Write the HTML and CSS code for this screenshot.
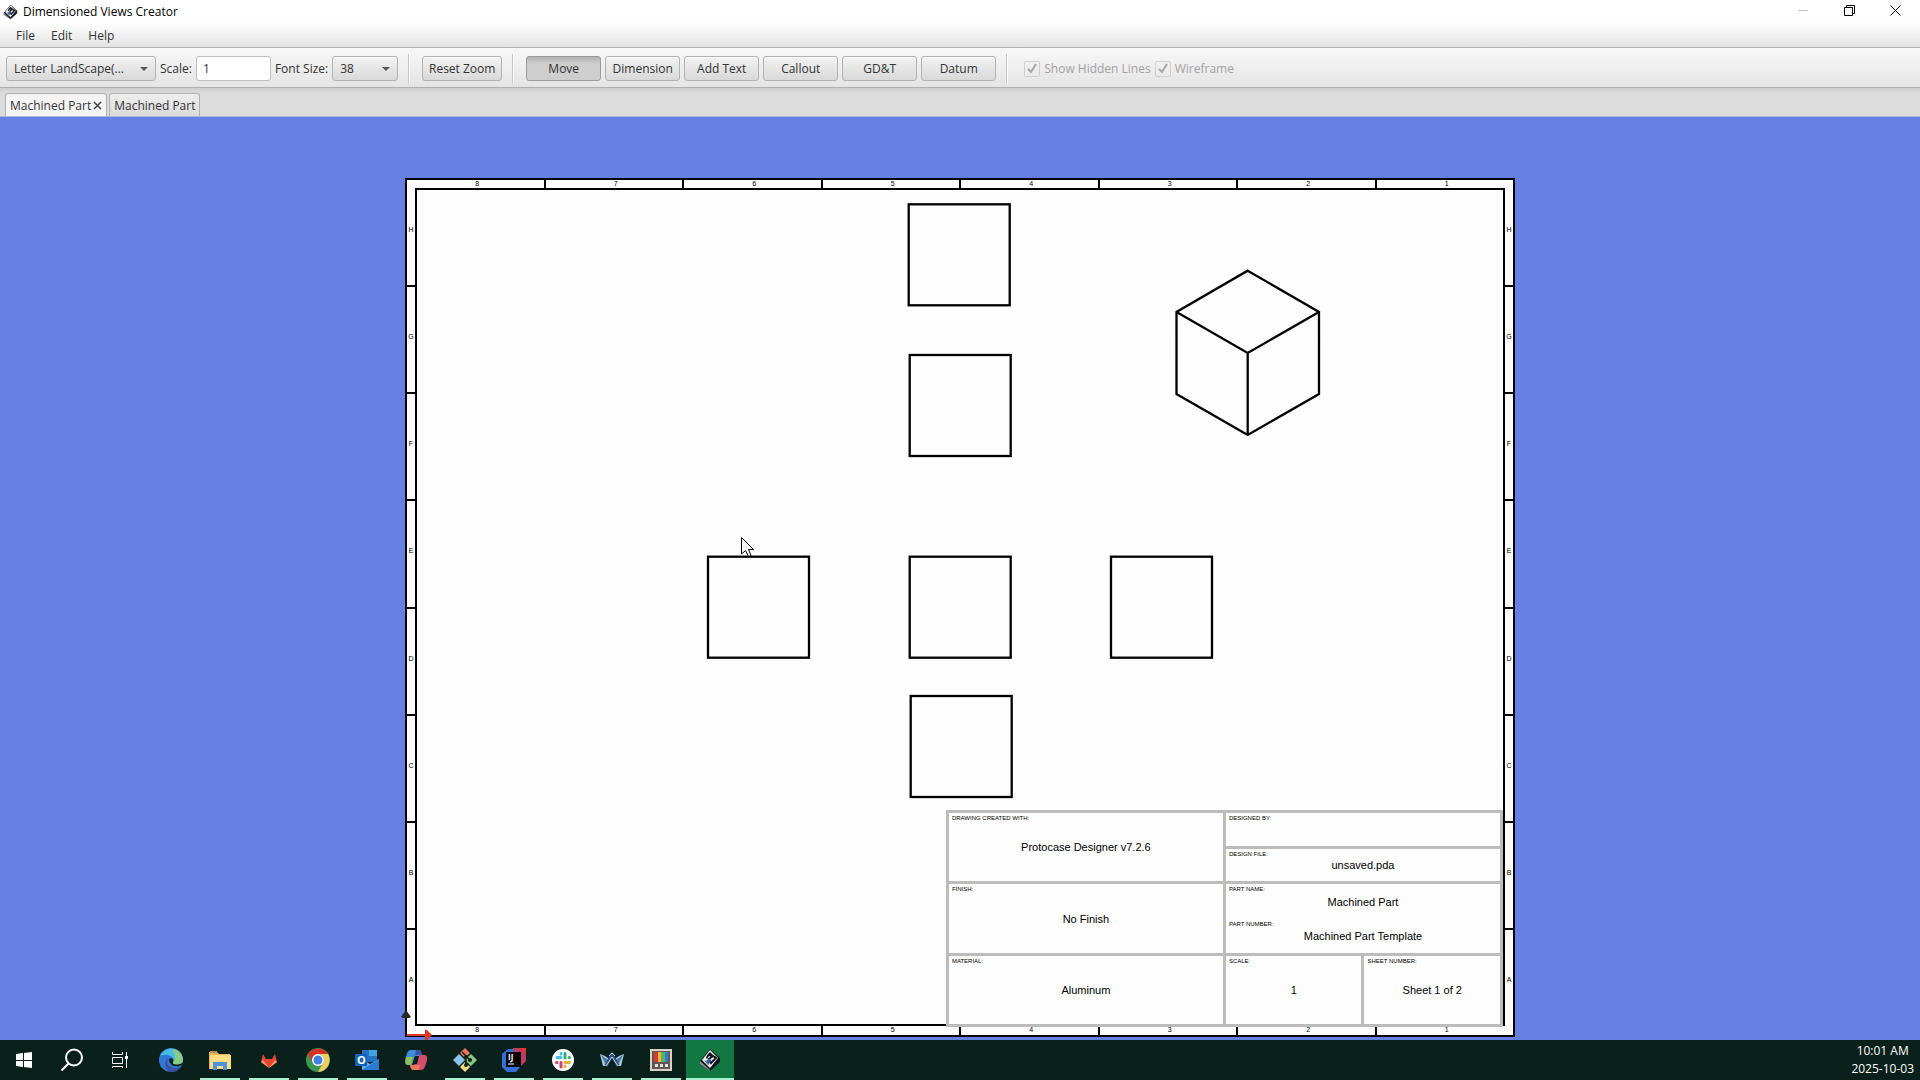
FILE: index.html
```
<!DOCTYPE html>
<html lang="en">
<head>
    <meta charset="UTF-8">
    <meta name="viewport" content="width=device-width, initial-scale=1.0">
    <title>Dimensioned Views Creator</title>
    <link rel="stylesheet" href="styles.css">
</head>
<body>
    <!-- shared app logo -->
    <svg class="symbols" aria-hidden="true">
        <symbol id="logo" viewBox="0 0 22 24">
            <path d="M1 13 L11 1 L21 10 L21 14 L11 23 L1 16 Z" fill="#10141c"/>
            <path d="M1 13 L11 22 L11 23 L1 16 Z" fill="#8d9299"/>
            <path d="M3 12 L11 2 L19 10 L11 20 Z" fill="#f4f4f4"/>
            <path d="M8 7 L11 4 L14 7 L12 9 L10 8 L8 11 L7 10 Z" fill="#10141c"/>
            <path d="M10 11 L14 8 L17 10 L12 15 Z" fill="none" stroke="#10141c" stroke-width="2"/>
            <path d="M5 12 L7 13 L10 10 L12 13 L10 16 L9 17 Z" fill="#3b62a8"/>
        </symbol>
    </svg>

    <header class="title-bar">
        <svg class="title-icon"><use href="#logo"/></svg>
        <h1>Dimensioned Views Creator</h1>
        <div class="window-buttons">
            <button aria-label="Minimize"><svg width="11" height="11"><path d="M0 5.5H10" stroke="#c4c4c4"/></svg></button>
            <button aria-label="Restore"><svg width="11" height="11"><path d="M.5 2.5H8.5V10.5H.5ZM2.5 2.5V.5H10.5V8.5H8.5" fill="none" stroke="#000"/></svg></button>
            <button aria-label="Close"><svg width="11" height="11"><path d="M.5 .5L10.5 10.5M10.5 .5L.5 10.5" stroke="#000"/></svg></button>
        </div>
    </header>

    <nav class="menu-bar">
        <button>File</button>
        <button>Edit</button>
        <button>Help</button>
    </nav>

    <div class="toolbar">
        <select class="page-size" aria-label="Page size"><option>Letter LandScape(...</option></select>
        <label for="scale">Scale:</label>
        <input type="text" id="scale" value="1">
        <label for="fontSize">Font Size:</label>
        <select id="fontSize"><option>38</option></select>
        <span class="separator"></span>
        <button>Reset Zoom</button>
        <span class="separator"></span>
        <div class="tools">
            <button class="pressed">Move</button>
            <button>Dimension</button>
            <button>Add Text</button>
            <button>Callout</button>
            <button>GD&amp;T</button>
            <button>Datum</button>
        </div>
        <span class="separator"></span>
        <div class="options">
            <input type="checkbox" id="hiddenLines" checked disabled>
            <label for="hiddenLines">Show Hidden Lines</label>
            <input type="checkbox" id="wireframe" checked disabled>
            <label for="wireframe">Wireframe</label>
        </div>
    </div>

    <div class="tabs">
        <button class="tab active">Machined Part
            <svg width="9" height="9"><path d="M1 1L8 8M8 1L1 8" stroke="#444" stroke-width="1.5"/></svg>
        </button>
        <button class="tab">Machined Part</button>
    </div>

    <main class="canvas">
        <div class="sheet">
            <div class="ruler top"><span>8</span><span>7</span><span>6</span><span>5</span><span>4</span><span>3</span><span>2</span><span>1</span></div>
            <div class="ruler side left"><span>H</span><span>G</span><span>F</span><span>E</span><span>D</span><span>C</span><span>B</span><span>A</span></div>
            <div class="ruler side right"><span>H</span><span>G</span><span>F</span><span>E</span><span>D</span><span>C</span><span>B</span><span>A</span></div>
            <div class="ruler bottom"><span>8</span><span>7</span><span>6</span><span>5</span><span>4</span><span>3</span><span>2</span><span>1</span></div>

            <div class="frame">
                <svg class="views" viewBox="0 0 1086 834">
                    <g fill="none" stroke="#000" stroke-width="2.3">
                        <rect x="491.7" y="14.3" width="101" height="101"/>
                        <rect x="492.7" y="165" width="101" height="101"/>
                        <rect x="291" y="366.7" width="101" height="101"/>
                        <rect x="492.7" y="366.7" width="101" height="101"/>
                        <rect x="694" y="366.7" width="101" height="101"/>
                        <rect x="493.7" y="506" width="101" height="101"/>
                        <!-- isometric view -->
                        <path d="M830.7 80.7L902 122V204L830.7 245L759.5 204V122ZM759.5 122L830.7 163L902 122M830.7 163V245"/>
                    </g>
                    <path d="M324.5 347.5V364L328.5 360.5L331.500 366.5L334 365.5L331.5 359.5H336.5Z" fill="#fff" stroke="#000"/>
                </svg>

                <dl class="title-block">
                    <div class="wide tall"><dt>DRAWING CREATED WITH:</dt><dd>Protocase Designer v7.2.6</dd></div>
                    <div class="wide"><dt>DESIGNED BY:</dt><dd></dd></div>
                    <div class="wide"><dt>DESIGN FILE:</dt><dd>unsaved.pda</dd></div>
                    <div class="wide tall"><dt>FINISH:</dt><dd>No Finish</dd></div>
                    <div class="wide tall part">
                        <div><dt>PART NAME:</dt><dd>Machined Part</dd></div>
                        <div><dt>PART NUMBER:</dt><dd>Machined Part Template</dd></div>
                    </div>
                    <div class="wide tall"><dt>MATERIAL:</dt><dd>Aluminum</dd></div>
                    <div class="tall"><dt>SCALE:</dt><dd>1</dd></div>
                    <div class="tall"><dt>SHEET NUMBER:</dt><dd>Sheet 1 of 2</dd></div>
                </dl>
            </div>

            <svg class="origin" width="32" height="32">
                <path d="M6 27V6" stroke="#000" stroke-width="2"/>
                <path d="M1 8L6 1L11 8L9 9H3Z" fill="#272525"/>
                <path d="M7 26H25" stroke="#de3a20" stroke-width="2"/>
                <path d="M25 21H27L32 26L27 31H25Z" fill="#de3a20"/>
            </svg>
        </div>
    </main>

    <footer class="taskbar">
        <button aria-label="Start">
            <svg viewBox="0 0 24 24"><path d="M4 6L11 5V12H4ZM12 5L20 4V12H12ZM4 13H11V19L4 18ZM12 13H20V20L12 19Z" fill="#fff"/></svg>
        </button>
        <button aria-label="Search">
            <svg viewBox="0 0 24 24"><circle cx="14" cy="9.5" r="8" fill="none" stroke="#fff" stroke-width="2"/><path d="M8.5 15.5L1.5 22.5" stroke="#fff" stroke-width="2"/></svg>
        </button>
        <button aria-label="Task View">
            <svg viewBox="0 0 24 24"><path d="M4.5 4V6.5H14.5V4M4.5 9.5H14.5V15.5H4.5ZM4.5 20V18.5H14.5V20M18.5 4V20" fill="none" stroke="#fff"/><path d="M17 8H20V11H17Z" fill="#fff"/></svg>
        </button>
        <div class="apps">
            <button aria-label="Edge">
                <svg viewBox="0 0 24 24">
                    <circle cx="12" cy="12" r="12" fill="#2f78d6"/>
                    <path d="M1 8A12 12 0 0 1 24 11C24 15 21 17 17 17C14 17 13 15 15 13C15 8 7 5 1 8Z" fill="#45bde6"/>
                    <path d="M15 1A12 12 0 0 1 24 11C24 15 21 17 17 17C14 17 13 15 15 13C17 9 16 5 13 3Z" fill="#8acb86"/>
                    <path d="M9 10C6 17 12 22 21 19A12 12 0 0 1 10 24C5 20 5 13 9 10Z" fill="#3c509f"/>
                    <path d="M10 11C13 9 15 11 14 14C13 16 16 18 24 15C22 20 10 20 10 11Z" fill="#08201a"/>
                </svg>
            </button>
            <button class="running" aria-label="File Explorer">
                <svg viewBox="0 0 24 24">
                    <path d="M1 4H9L11 6H22V21H1Z" fill="#e9b94c"/>
                    <path d="M2 7H23V21H2Z" fill="#f8dd85"/>
                    <path d="M5 14H19V22H15V18H9V22H5Z" fill="#4e91dc"/>
                    <path d="M2 3H9V5H2Z" fill="#b8905c"/>
                </svg>
            </button>
            <button class="running" aria-label="GitLab">
                <svg viewBox="0 0 24 24">
                    <path d="M6 6L9 11H15L18 6L20 14L12 20L4 14Z" fill="#e8452f"/>
                    <path d="M4 14L6 12L12 20ZM20 14L18 12L12 20Z" fill="#f49a7a"/>
                </svg>
            </button>
            <button class="running" aria-label="Chrome">
                <svg viewBox="0 0 24 24">
                    <circle cx="12" cy="12" r="12" fill="#3b9850"/>
                    <path d="M2 6A12 12 0 0 1 22 6H12A6 6 0 0 0 7 15Z" fill="#d93025"/>
                    <path d="M22 6A12 12 0 0 1 12 24L17 15A6 6 0 0 0 14 6Z" fill="#edce5d"/>
                    <circle cx="12" cy="12" r="6" fill="#fff"/>
                    <circle cx="12" cy="12" r="4.5" fill="#3f7fe0"/>
                </svg>
            </button>
            <button class="running" aria-label="Outlook">
                <svg viewBox="0 0 24 24">
                    <path d="M7 2H22V14H7Z" fill="#2372c4"/>
                    <path d="M14 2H22V8H14Z" fill="#3fa4e2"/>
                    <path d="M7 11L15 16L24 11V22H7Z" fill="#54aeea"/>
                    <path d="M7 22L24 11V22Z" fill="#2c7bd0"/>
                    <path d="M0 6H12V18H0Z" fill="#1262ba"/>
                    <text x="2" y="16" class="icon-text">O</text>
                </svg>
            </button>
            <button aria-label="Copilot">
                <svg viewBox="0 0 24 24">
                    <path d="M6 2H16L18 8H11L8 17H4C0 17 1 12 2 9Q3 3 6 2Z" fill="#3d8ed8"/>
                    <path d="M2 9H9L7 17H4C1 17 1 13 2 9Z" fill="#91bf58"/>
                    <path d="M12 2H15Q17 2 18 7H20Q24 7 23 12Q21 22 17 22H9Q7 22 6 17H8Q12 17 13 13L15 7H11Z" fill="#d54d69"/>
                    <path d="M12 2H15Q17 2 18 7H11Z" fill="#3057ac"/>
                    <path d="M6 17H16L15 22H9Q7 22 6 17Z" fill="#ed765b"/>
                    <path d="M11 8H15L13 16H9Z" fill="#0a2419"/>
                </svg>
            </button>
            <button class="running" aria-label="Git">
                <svg viewBox="0 0 24 24">
                    <path d="M12 0L17 5L12 10L7 5Z" fill="#e7775d"/>
                    <path d="M6 6L12 12L6 18L0 12Z" fill="#8bc6f0"/>
                    <path d="M18 6L24 12L18 18L12 12Z" fill="#86cb83"/>
                    <path d="M12 14L17 19L12 24L7 19Z" fill="#f4dd7c"/>
                    <path d="M9 4L13 8V17M13 8L17 12" fill="none" stroke="#172018" stroke-width="1.5"/>
                    <circle cx="13" cy="9" r="2" fill="#172018"/><circle cx="17" cy="12" r="2" fill="#172018"/><circle cx="13" cy="17" r="2" fill="#172018"/>
                </svg>
            </button>
            <button class="running" aria-label="IntelliJ IDEA">
                <svg viewBox="0 0 24 24">
                    <path d="M0 6L6 1H18L22 14L14 24H5L0 19Z" fill="#3270d8"/>
                    <path d="M11 0H24V13L19 18L12 7Z" fill="#bd3c67"/>
                    <path d="M19 0H24V6Z" fill="#ee3424"/>
                    <path d="M4 4H19V19H4Z" fill="#000"/>
                    <text x="6" y="12" class="icon-text small">IJ</text>
                    <path d="M6 16H12" stroke="#fff"/>
                </svg>
            </button>
            <button class="running" aria-label="Slack">
                <svg viewBox="0 0 24 24">
                    <circle cx="12" cy="12" r="11" fill="#fff"/>
                    <g fill="none" stroke-width="3" stroke-linecap="round">
                        <path d="M6 9.5H10M10 5.5V6" stroke="#43bde8"/>
                        <path d="M14 5.5V10M18 9.5H18.5" stroke="#39ad79"/>
                        <path d="M14 14.5H18.5M14 18.5V18" stroke="#e5b13d"/>
                        <path d="M10 14.5V19M6 14.5H5.5" stroke="#d53d65"/>
                    </g>
                </svg>
            </button>
            <button class="running" aria-label="Workspace">
                <svg viewBox="0 0 24 24">
                    <path d="M0 6L5 8L9 11L7 18H3ZM24 6L19 8L15 11L17 18H21Z" fill="#a9c9df"/>
                    <path d="M1 7L8 12L6 17ZM23 7L16 12L18 17Z" fill="#4d7896"/>
                    <path d="M6 18L12 6L18 18" fill="none" stroke="#2c4f86" stroke-width="3"/>
                    <path d="M6 18L12 9L18 18M9 8L12 5L15 8" fill="none" stroke="#cfe0ea" stroke-width="1"/>
                </svg>
            </button>
            <button class="running" aria-label="Screen Recorder">
                <svg viewBox="0 0 24 24">
                    <path d="M2 2H22V22H2Z" fill="#5d5855" stroke="#d8d2c9" stroke-width="2"/>
                    <path d="M5 4H9V14H5Z" fill="#db3a2b"/><path d="M9 4H12V14H9Z" fill="#f2b43b"/><path d="M12 4H16V14H12Z" fill="#50b75c"/><path d="M16 4H19V14H16Z" fill="#3c77cc"/>
                    <path d="M6 16H9V19H6ZM11 16H14V19H11ZM16 16H19V19H16Z" fill="#e7e3dd"/>
                </svg>
            </button>
            <button class="running current" aria-label="Dimensioned Views Creator">
                <svg><use href="#logo"/></svg>
            </button>
        </div>
        <div class="clock">
            <time>10:01 AM</time>
            <time>2025-10-03</time>
        </div>
    </footer>
</body>
</html>
```
FILE: styles.css
```
* {
    box-sizing: border-box;
}

body {
    display: flex;
    flex-direction: column;
    height: 100vh;
    margin: 0;
    overflow: hidden;
    background: white;
    color: #333;
    font-family: "Open Sans", "Noto Sans", sans-serif;
    font-size: 12px;
}

button, input, select {
    font: inherit;
    color: inherit;
    margin: 0;
}

button {
    padding: 0;
    border: none;
    background: none;
}

.symbols {
    display: none;
}

/* title bar and menu */
.title-bar {
    display: flex;
    align-items: center;
    height: 23px;
    padding: 0 2px 0 3px;
}

.title-bar h1 {
    margin: 0 0 0 5px;
    color: black;
    font-size: 12px;
    font-weight: normal;
}

.title-icon {
    width: 15px;
    height: 16px;
}

.window-buttons {
    display: flex;
    align-self: flex-start;
    height: 20px;
    margin-left: auto;
}

.window-buttons button {
    display: flex;
    align-items: center;
    justify-content: center;
    width: 46px;
}

.menu-bar {
    display: flex;
    height: 25px;
    padding: 0 8px;
    border-bottom: 1px solid #b0b0b0;
    background: linear-gradient(white, #e2e2e2);
}

.menu-bar button {
    padding: 0 8px;
}

/* toolbar */
.toolbar {
    display: flex;
    align-items: center;
    gap: 4px;
    height: 40px;
    padding: 2px 6px 0;
    border-bottom: 1px solid #b0b0b0;
    background: linear-gradient(#f8f8f8, #e4e4e4);
    white-space: nowrap;
}

.toolbar button, .toolbar select {
    height: 25px;
    border: 1px solid #b2b2b2;
    border-radius: 3px;
    background: linear-gradient(#f2f2f2, #d9d9d9);
    box-shadow: inset 0 1px #fafafa;
}

.toolbar button {
    width: 80px;
}

.toolbar select {
    appearance: none;
    width: 66px;
    padding: 0 7px;
    background: url("data:image/svg+xml,%3Csvg xmlns='http://www.w3.org/2000/svg' width='8' height='4'%3E%3Cpath d='M0 0H8L4 4Z' fill='%23555'/%3E%3C/svg%3E") right 7px center no-repeat, linear-gradient(#f2f2f2, #d9d9d9);
}

.toolbar .page-size {
    width: 150px;
}

.toolbar input[type="text"] {
    width: 75px;
    height: 25px;
    padding: 0 6px;
    border: 1px solid #c0c0c0;
    border-radius: 3px;
    background: white;
}

.separator {
    width: 2px;
    height: 30px;
    margin: 0 8px 0 6px;
    border-left: 1px solid #c8c8c8;
    border-right: 1px solid white;
}

.tools, .options {
    display: flex;
    align-items: center;
    gap: 4px;
}

.options {
    padding-left: 4px;
}

.toolbar .tools button {
    width: 75px;
}

.toolbar .tools .pressed {
    border-color: #9a9a9a;
    background: linear-gradient(#b2b2b2, #cecece 30%, #cecece);
    box-shadow: none;
}

.toolbar input[type="checkbox"] {
    appearance: none;
    width: 16px;
    height: 16px;
    border: 1px solid #d0d0d0;
    border-radius: 2px;
    background: url("data:image/svg+xml,%3Csvg xmlns='http://www.w3.org/2000/svg' width='10' height='11'%3E%3Cpath d='M1 6L4 9L9 1' fill='none' stroke='%23a4a4a4' stroke-width='2'/%3E%3C/svg%3E") center no-repeat;
}

input:disabled + label {
    color: #a2a2a2;
}

/* tabs */
.tabs {
    display: flex;
    align-items: flex-end;
    gap: 2px;
    height: 29px;
    padding: 0 5px;
    border-bottom: 1px solid #a9b6ea;
    background: linear-gradient(#cecece, #dcdcdc 6px, #dcdcdc);
}

.tab {
    display: flex;
    align-items: center;
    gap: 2px;
    height: 23px;
    padding: 0 4px;
    border: 1px solid #b0b0b0;
    border-bottom: none;
    border-radius: 3px 3px 0 0;
    background: linear-gradient(#eee, #dadada);
}

.tab.active {
    background: #f4f4f4;
}

/* drawing sheet */
.canvas {
    flex: 1;
    display: flex;
    justify-content: center;
    min-height: 0;
    padding: 61px 0 3px;
    background: #667fe3;
}

.sheet {
    position: relative;
    display: grid;
    grid-template-columns: 8px minmax(0, 1fr) 8px;
    grid-template-rows: 8px minmax(0, 1fr) 9px;
    height: 100%;
    aspect-ratio: 1110 / 859;
    border: 2px solid black;
    background: #fdfdfd;
    color: black;
    font-family: "Liberation Sans", Arial, sans-serif;
}

.ruler {
    display: grid;
    grid-column: 1 / -1;
    grid-row: 1;
    grid-template-columns: repeat(8, 1fr);
    margin-left: -2px;
    font-size: 7px;
    line-height: 8px;
}

.ruler span {
    padding-left: 4px;
    border-left: 2px solid black;
    text-align: center;
}

.ruler.bottom {
    grid-row: 3;
}

.ruler.side {
    grid-column: 1;
    grid-row: 1 / -1;
    grid-template-columns: none;
    grid-template-rows: repeat(8, 1fr);
    margin: -2px 0 0;
}

.ruler.side.right {
    grid-column: 3;
}

.ruler.side span {
    display: flex;
    align-items: center;
    justify-content: center;
    padding: 0 0 5px;
    border-left: none;
    border-top: 2px solid black;
}

.frame {
    display: grid;
    grid-column: 2;
    grid-row: 2;
    grid-template: minmax(0, 1fr) / minmax(0, 1fr);
    border: 2px solid black;
}

.views, .title-block {
    grid-area: 1 / 1;
}

.views {
    width: 100%;
    height: 100%;
}

.title-block {
    display: grid;
    grid-template-columns: repeat(4, 1fr);
    grid-template-rows: repeat(6, minmax(0, 1fr));
    gap: 3px;
    place-self: end;
    width: 51.3%;
    height: 26%;
    margin: 0 0 -3px;
    padding: 3px;
    background: #bcbcbc;
}

.title-block div {
    display: grid;
    position: relative;
    background: #fdfdfd;
}

.title-block .wide {
    grid-column: span 2;
}

.title-block .tall {
    grid-row: span 2;
}

.title-block dt {
    position: absolute;
    top: 1px;
    left: 3px;
    font-size: 6px;
    line-height: 8px;
}

.title-block dd {
    margin: 0;
    place-self: center;
    font-size: 11px;
}

.origin {
    position: absolute;
    left: -7px;
    bottom: -6px;
}

/* taskbar */
.taskbar {
    display: flex;
    height: 40px;
    background: #09211a;
    color: white;
}

.taskbar button {
    display: flex;
    align-items: center;
    justify-content: center;
    width: 48px;
    border-top: 2px solid transparent;
    border-bottom: 2px solid transparent;
}

.taskbar svg {
    width: 24px;
    height: 24px;
}

.apps {
    display: flex;
    gap: 1px;
    margin-left: 3px;
}

.apps .running {
    background: linear-gradient(#aaf0d0, #aaf0d0) center bottom / 40px 2px no-repeat border-box;
}

.apps .current {
    background: linear-gradient(#aaf0d0, #aaf0d0) center bottom / 48px 2px no-repeat border-box, #107840 border-box;
}

.icon-text {
    fill: white;
    font-size: 11px;
    font-weight: bold;
}

.icon-text.small {
    font-size: 8px;
}

.clock {
    display: flex;
    flex-direction: column;
    align-items: center;
    justify-content: center;
    margin-left: auto;
    padding-right: 6px;
    line-height: 18px;
}
```
